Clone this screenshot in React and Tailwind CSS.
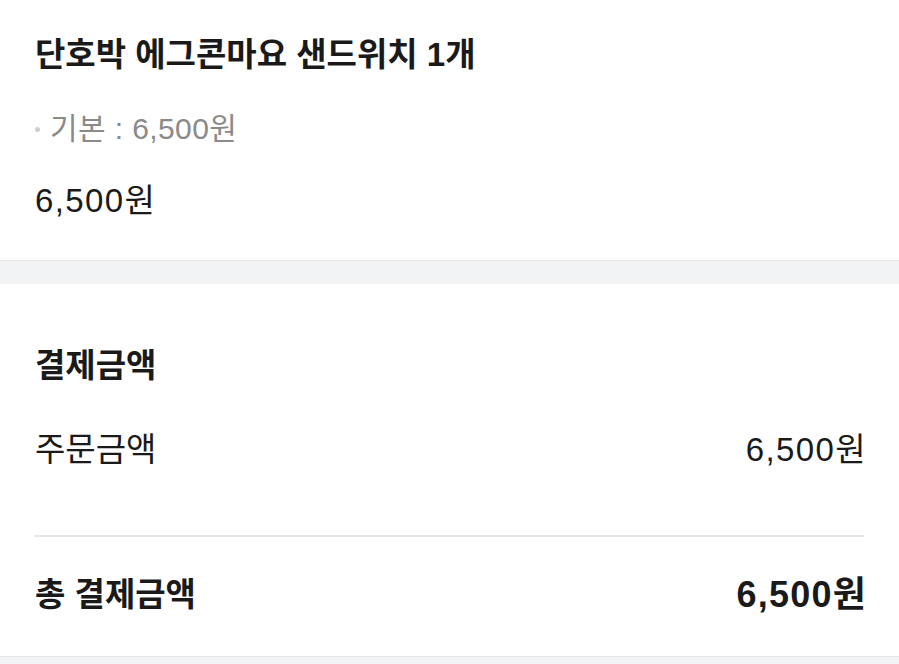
export default function App() {
  const font = { fontFamily: '"Liberation Sans", "Noto Sans CJK KR", sans-serif' }
  return (
    <div className="w-[899px] h-[664px] overflow-hidden bg-[#f2f3f5] text-[#1a1a1a]" style={font}>
      {/* Order item */}
      <section className="bg-white px-[35px] pt-[35px] pb-[39px] border-b border-[#e4e5e7]">
        <h1 className="text-[33px] leading-[40px] font-bold">단호박 에그콘마요 샌드위치 1개</h1>
        <div className="mt-[33px] flex items-center h-[40px] text-[30px] tracking-[0.4px] text-[#8a8a8a]">
          <span className="w-[5px] h-[5px] rounded-full bg-[#cfcfcf] mr-[10px] mt-[3px]" />
          <span>기본 : 6,500원</span>
        </div>
        <p className="mt-[33px] text-[33px] leading-[40px] tracking-[1.4px]">6,500원</p>
      </section>

      <div className="h-[23px]" />

      {/* Payment summary */}
      <section className="bg-white px-[35px] pt-[62px] pb-[41px] border-b border-[#e4e5e7]">
        <h2 className="text-[33px] leading-[40px] font-bold">결제금액</h2>
        <div className="mt-[44px] flex justify-between items-center text-[33px] leading-[40px]">
          <span>주문금액</span>
          <span className="tracking-[1.4px] -mr-[3px]">6,500원</span>
        </div>
        <div className="mt-[65px] h-[2px] bg-[#e6e6e8]" />
        <div className="mt-[38px] flex justify-between items-center leading-[40px] font-bold">
          <span className="text-[33px]">총 결제금액</span>
          <span className="text-[36px] tracking-[1.2px] -mr-[3px]">6,500원</span>
        </div>
      </section>
    </div>
  )
}
